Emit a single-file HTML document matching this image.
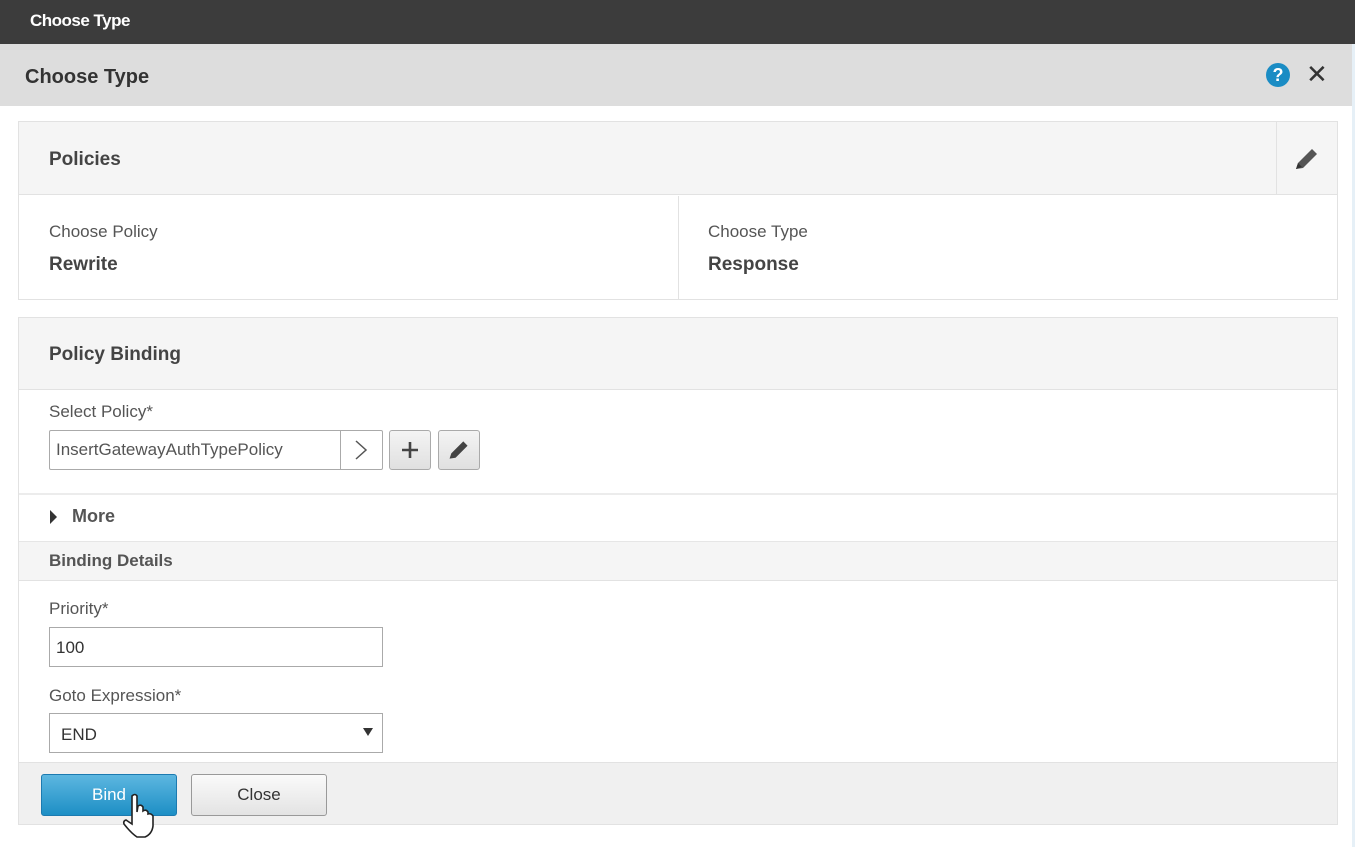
<!DOCTYPE html>
<html><head><style>
*{box-sizing:border-box;margin:0;padding:0}
body{width:1355px;height:847px;background:#fff;font-family:"Liberation Sans",sans-serif;position:relative;overflow:hidden;color:#333}
.a{position:absolute}
.lbl{font-size:17px;color:#555}
.val{font-size:19px;font-weight:bold;color:#444}
</style></head><body>
<div class="a" style="left:0;top:0;width:1355px;height:44px;background:#3c3c3c"></div>
<div class="a" style="left:30px;top:11px;color:#fff;font-weight:bold;font-size:17px;letter-spacing:-0.5px">Choose Type</div>
<div class="a" style="left:0;top:44px;width:1352px;height:62px;background:#dddddd"></div>
<div class="a" style="left:25px;top:66px;font-weight:bold;font-size:20px;color:#333">Choose Type</div>
<div class="a" style="left:1266px;top:63px;width:24px;height:24px;border-radius:50%;background:#1a8cc4;color:#fff;font-weight:bold;font-size:18px;text-align:center;line-height:24px">?</div>
<div class="a" style="left:1306px;top:60px;font-size:26px;color:#333;line-height:28px">✕</div>
<div class="a" style="left:1352px;top:44px;width:3px;height:803px;background:#e6f0f7"></div>

<!-- Policies -->
<div class="a" style="left:18px;top:121px;width:1320px;height:179px;border:1px solid #e2e2e2"></div>
<div class="a" style="left:19px;top:122px;width:1318px;height:73px;background:#f5f5f5;border-bottom:1px solid #e2e2e2"></div>
<div class="a" style="left:1276px;top:122px;width:1px;height:72px;background:#e2e2e2"></div>
<svg class="a" style="left:1293px;top:146px" width="28" height="26" viewBox="0 0 28 26"><path d="M3 23 L5 17 L19 3 L24 8 L10 22 Z" fill="#555"/><path d="M3 23 L5 17 L9 21 Z" fill="#333"/></svg>
<div class="a" style="left:49px;top:149px;font-weight:bold;font-size:19px;color:#444">Policies</div>
<div class="a" style="left:678px;top:196px;width:1px;height:103px;background:#e2e2e2"></div>
<div class="a lbl" style="left:49px;top:222px">Choose Policy</div>
<div class="a val" style="left:49px;top:254px">Rewrite</div>
<div class="a lbl" style="left:708px;top:222px">Choose Type</div>
<div class="a val" style="left:708px;top:254px">Response</div>

<!-- Policy Binding -->
<div class="a" style="left:18px;top:317px;width:1320px;height:508px;border:1px solid #e2e2e2"></div>
<div class="a" style="left:19px;top:318px;width:1318px;height:72px;background:#f5f5f5;border-bottom:1px solid #e2e2e2"></div>
<div class="a" style="left:49px;top:344px;font-weight:bold;font-size:19px;color:#444">Policy Binding</div>
<div class="a lbl" style="left:49px;top:402px">Select Policy*</div>
<div class="a" style="left:49px;top:430px;width:334px;height:40px;border:1px solid #aaa;border-radius:2px"></div>
<div class="a" style="left:340px;top:431px;width:1px;height:38px;background:#aaa"></div>
<div class="a" style="left:56px;top:440px;font-size:17px;color:#555">InsertGatewayAuthTypePolicy</div>
<svg class="a" style="left:350px;top:438px" width="22" height="24"><path d="M6 3 L16 12 L6 21" stroke="#555" stroke-width="1.5" fill="none"/></svg>
<div class="a" style="left:389px;top:430px;width:42px;height:40px;border:1px solid #aaa;border-radius:3px;background:linear-gradient(#f4f4f4,#e0e0e0)"></div>
<svg class="a" style="left:400px;top:440px" width="20" height="20"><path d="M10 2 V18 M2 10 H18" stroke="#444" stroke-width="2.6"/></svg>
<div class="a" style="left:438px;top:430px;width:42px;height:40px;border:1px solid #aaa;border-radius:3px;background:linear-gradient(#f4f4f4,#e0e0e0)"></div>
<svg class="a" style="left:447px;top:438px" width="24" height="24" viewBox="0 0 28 26"><path d="M3 23 L5 17 L19 3 L24 8 L10 22 Z" fill="#444"/></svg>
<div class="a" style="left:19px;top:493px;width:1318px;height:2px;background:#ececec"></div>
<svg class="a" style="left:49px;top:509px" width="10" height="16"><path d="M1 1 L8 8 L1 15 Z" fill="#333"/></svg>
<div class="a" style="left:72px;top:506px;font-weight:bold;font-size:18px;color:#555">More</div>
<div class="a" style="left:19px;top:541px;width:1318px;height:40px;background:#f5f5f5;border-top:1px solid #e6e6e6;border-bottom:1px solid #e2e2e2"></div>
<div class="a" style="left:49px;top:551px;font-weight:bold;font-size:17px;color:#555">Binding Details</div>
<div class="a lbl" style="left:49px;top:599px">Priority*</div>
<div class="a" style="left:49px;top:627px;width:334px;height:40px;border:1px solid #aaa"></div>
<div class="a" style="left:56px;top:638px;font-size:17px;color:#333">100</div>
<div class="a lbl" style="left:49px;top:686px">Goto Expression*</div>
<div class="a" style="left:49px;top:713px;width:334px;height:40px;border:1px solid #aaa"></div>
<div class="a" style="left:61px;top:725px;font-size:17px;color:#333">END</div>
<svg class="a" style="left:362px;top:727px" width="12" height="10"><path d="M1 1 H11 L6 9 Z" fill="#333"/></svg>
<div class="a" style="left:19px;top:762px;width:1318px;height:62px;background:#f0f0f0;border-top:1px solid #e2e2e2"></div>
<div class="a" style="left:41px;top:774px;width:136px;height:42px;border:1px solid #1c7ab0;border-radius:3px;background:linear-gradient(#5db7e0,#1d8fc5);color:#fff;font-size:17px;text-align:center;line-height:40px">Bind</div>
<div class="a" style="left:191px;top:774px;width:136px;height:42px;border:1px solid #999;border-radius:3px;background:linear-gradient(#fafafa,#e3e3e3);color:#333;font-size:17px;text-align:center;line-height:40px">Close</div>
<svg class="a" style="left:120px;top:792px" width="40" height="48" viewBox="0 0 40 48"><path d="M12 4 Q15 1 17 4 L17 20 L18 14 Q21 12 23 15 L23 19 Q26 17 28 20 L28 22 Q31 21 33 24 L33 34 Q32 42 25 45 L17 45 Q11 41 4 32 Q3 29 6 28 L12 32 Z" fill="#fff" stroke="#222" stroke-width="1.6"/></svg>
</body></html>
